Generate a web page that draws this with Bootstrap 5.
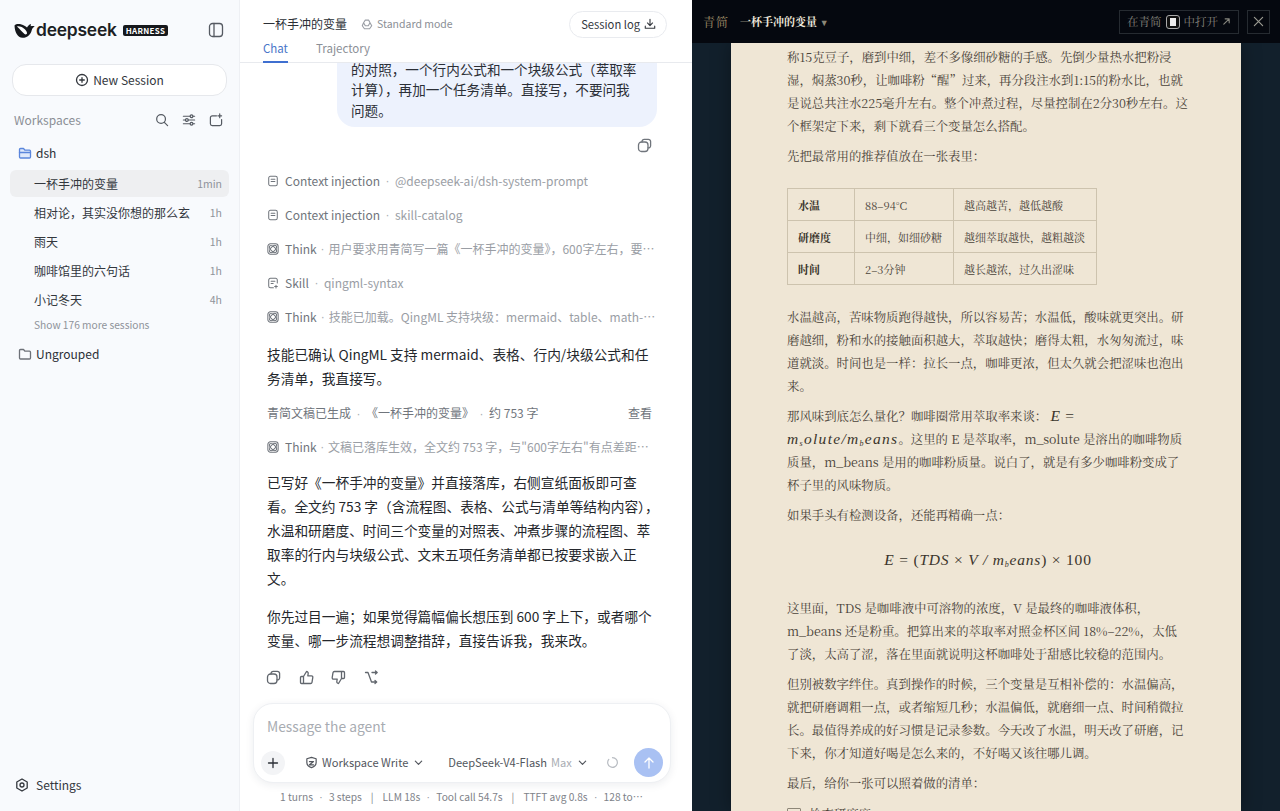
<!DOCTYPE html>
<html lang="zh-CN">
<head>
    <meta charset="UTF-8">
    <meta name="viewport" content="width=device-width, initial-scale=1.0">
    <title>DeepSeek Harness</title>
    <link href="https://cdn.jsdelivr.net/npm/bootstrap@5.3.0/dist/css/bootstrap.min.css" rel="stylesheet">
    <style>
        html, body { height: 811px; overflow: hidden; }
        body { font-family: "Noto Sans CJK SC", "Noto Sans", sans-serif; font-size: 12px; color: #2b2f36; background: #fff; }
        .ic { width: 14px; height: 14px; fill: none; stroke: currentColor; stroke-width: 1.3; stroke-linecap: round; stroke-linejoin: round; flex: none; }

        /* sidebar */
        .side { width: 240px; background: #f8fafd; border-right: 1px solid #eef0f4; padding: 0 10px; }
        .brand { height: 60px; padding: 0 4px; }
        .brand-name { font-family: "Inter", sans-serif; font-weight: 600; font-size: 17.4px; letter-spacing: -.2px; color: #1c1f24; line-height: 1; }
        .badge-h { background: #16181c; color: #fff; font-size: 8px; font-weight: 700; line-height: 11px; padding: 0 3px; border-radius: 2px; letter-spacing: .3px; margin-left: 6px; }
        .btn-new { height: 32px; margin: 4px 2px 0; background: #fff; border: 1px solid #e6e8ec; border-radius: 14px; font-size: 12px; color: #33373d; }
        .ws-head { height: 24px; margin-top: 12px; padding: 0 6px 0 4px; color: #8b8f96; font-size: 12px; }
        .ws-head .ic { color: #555a62; width: 14px; height: 14px; }
        .ws-head .ic + .ic { margin-left: 13px; }
        .folder { height: 24px; padding-left: 8px; font-size: 12px; color: #2b2f36; }
        .sess { height: 29px; padding: 0 7px 0 24px; font-size: 12px; color: #33373d; }
        .sess.active { background: #eeeff1; border-radius: 6px; height: 27px; margin: 1px 0; }
        .sess small { font-size: 10.5px; color: #8f939a; }
        .more { font-size: 10.2px; color: #8f939a; padding-left: 24px; height: 22px; }
        .settings { height: 26px; padding-left: 5px; margin-bottom: 13px; font-size: 12px; color: #33373d; }
        .settings .ic { margin-right: -1px; }

        /* chat */
        .chat { width: 452px; background: #fff; }
        .chat-head { height: 63px; border-bottom: 1px solid #e8eaee; padding: 0 25px 0 23px; }
        .chat-title { font-size: 12px; color: #2b2f36; }
        .mode-ic { color: #9a9ea5; width: 12px; height: 12px; margin-left: 14px; }
        .mode { font-size: 10.5px; color: #8b8f96; }
        .btn-log { height: 27px; padding: 0 10px 0 11px; border: 1px solid #e9ebef; border-radius: 14px; font-size: 11.2px; color: #33373d; background: #fff; }
        .tab { font-size: 11.5px; color: #8b8f96; padding-bottom: 4px; border-bottom: 2px solid transparent; }
        .tab.active { color: #4a76c9; border-bottom-color: #3f6fd0; }
        .chat-scroll { flex: 1 1 0; min-height: 0; overflow: hidden; padding: 0 35px 0 27px; }
        .bubble { align-self: flex-end; width: 320px; background: #edf2fd; border-radius: 0 0 18px 18px; padding: 40px 14px 7px; font-size: 13.6px; line-height: 20.5px; color: #2b2f36; flex: none; }
        .copy-row { height: 37px; flex: none; padding-right: 5px; color: #70757c; }
        .step { height: 34px; flex: none; font-size: 12px; color: #70757c; white-space: nowrap; }
        .step .ic { width: 12px; height: 12px; margin: 0 6px 0 0; color: #70757c; stroke-width: 1.2; }
        .dot { display: inline-block; width: 15px; text-align: center; color: #a9adb3; font-family: "Liberation Sans", sans-serif; }
        .step .det { color: #9a9ea5; overflow: hidden; text-overflow: ellipsis; }
        .md { font-size: 13.7px; line-height: 24px; color: #24272c; margin: 0 -3px 0 0; flex: none; }
        .actions { height: 26px; margin: 0 0 13px -1px; flex: none; color: #62676e; gap: 17.5px; }
        .actions .ic { width: 15px; height: 15px; }

        /* composer */
        .composer { height: 80px; margin: 0 21px 0 13px; border: 1px solid #eef0f3; border-radius: 20px; box-shadow: 0 2px 8px rgba(30,40,60,.08); background: #fff; flex: none; padding: 12px 7px 5px 7px; }
        .ph { color: #a8acb2; font-size: 13.8px; line-height: 20px; padding-left: 6px; }
        .plus { width: 24px; height: 24px; border-radius: 50%; background: #f3f4f6; color: #2b2f36; }
        .pick { font-size: 11.1px; color: #52565d; white-space: nowrap; }
        .pick span { color: #a8acb2; }
        .send { width: 29px; height: 29px; border-radius: 50%; background: #a9c1f3; color: #fff; }
        .stats { height: 28px; flex: none; font-size: 10.2px; color: #7e8289; white-space: nowrap; padding: 0 22px 0 40px; gap: 9px; }
        .stats .dot { width: 16px; color: #8e9298; }

        /* reader */
        .reader { width: 588px; background: #12202c; font-family: "Noto Serif CJK SC", "Liberation Serif", "Noto Sans CJK SC", serif; }
        .reader-bar { height: 43px; background: #05080f; padding: 0 10px 0 11px; flex: none; }
        .reader-bar .brand2 { color: #a3916b; font-size: 12px; letter-spacing: 1px; }
        .reader-bar .doc { color: #efe9dd; font-size: 11px; font-weight: 700; margin-left: 11px; }
        .reader-bar .doc i { color: #8c8778; font-style: normal; font-size: 9px; font-family: "Liberation Serif", serif; }
        .open-btn { height: 24px; padding: 0 7px; border: 1px solid #262b31; color: #85857d; font-size: 11.5px; }
        .open-btn b { display: inline-block; width: 14px; height: 14px; border: 1px solid #aaa; border-radius: 3px; background: #111; position: relative; }
        .open-btn b::after { content: ""; position: absolute; inset: 2px 3px; background: #eee; }
        .close-btn { width: 23px; height: 24px; border: 1px solid #262b31; color: #9b9b93; }
        .paper-wrap { flex: 1 1 0; min-height: 0; overflow: hidden; padding: 0 39px; }
        .paper { background: #efe6d5; height: 100%; overflow: hidden; padding: 3px 52px 0 56px; color: #4a4339; font-size: 12.4px; line-height: 23px; box-shadow: 0 0 18px rgba(0,0,0,.35); }
        .paper p { margin: 0 0 7px; }
        .paper table { border-collapse: collapse; margin: 20px 0 21px; font-size: 11px; line-height: 20px; }
        .paper td { border: 1px solid #cdc3ae; padding: 5px 10px; height: 32px; white-space: nowrap; }
        .paper td:first-child { width: 67px; font-weight: 700; color: #38332a; }
        .paper td:nth-child(2) { width: 99px; }
        .paper td:nth-child(3) { width: 143px; }
        .math { font-family: "Liberation Serif", serif; font-style: italic; font-size: 15.5px; line-height: 0; color: #3b352c; letter-spacing: .8px; }
        .math sub { font-size: 8px; line-height: 0; }
        .math u { font-style: normal; text-decoration: none; }
        .math-wide { letter-spacing: 1.3px; }
        .math-block { text-align: center; font-size: 15.5px; margin: 21px 0 26px; line-height: 23px; }
        .check { width: 14px; height: 14px; border: 1px solid #8e8778; border-radius: 1px; }
    </style>
</head>
<body>
<svg width="0" height="0" class="position-absolute">
    <defs>
        <symbol id="i-doc" viewBox="0 0 14 14"><rect x="2" y="1.5" width="10" height="11" rx="2"/><path d="M4.8 5h4.4M4.8 7.6h4.4"/></symbol>
        <symbol id="i-think" viewBox="0 0 14 14"><rect x="1" y="1" width="12" height="12" rx="3"/><ellipse cx="7" cy="7" rx="5.200" ry="2.600" transform="rotate(45 7 7)"/><ellipse cx="7" cy="7" rx="5.200" ry="2.600" transform="rotate(-45 7 7)"/></symbol>
        <symbol id="i-skill" viewBox="0 0 14 14"><path d="M12 7V3.5a2 2 0 0 0-2-2H4a2 2 0 0 0-2 2v7a2 2 0 0 0 2 2h3.5"/><path d="M4.8 5h4.4M4.8 7.6h2.4M10.5 9.5v3.2M8.9 11.1h3.2"/></symbol>
        <symbol id="i-copy" viewBox="0 0 15 15"><rect x="1.5" y="4" width="9.5" height="9.5" rx="3"/><path d="M5 4V3.6a2.2 2.2 0 0 1 2.2-2.2h4.2a2.2 2.2 0 0 1 2.2 2.2v4.2a2.2 2.2 0 0 1-2.6 2.1"/></symbol>
    </defs>
</svg>
<div class="d-flex" style="height:811px">
    <aside class="side d-flex flex-column flex-shrink-0">
        <div class="brand d-flex align-items-center">
            <svg width="21" height="15" viewBox="0 0 21 15" class="flex-shrink-0" style="margin-right:1px"><path fill="#16181c" d="M.5 2.500C2 .8 5 .8 7.500 1.500 9.500 2 11.500 3.200 13 4.500 13.800 3 15 1.500 17 1c-.3 1-.4 1.600-.2 2.200 1.200-.4 2.700-.4 3.900.2-1.700.8-2.500 2.100-2.900 3.600-.8 4-4.300 7.800-9.300 7.800S.8 9 .5 2.500z"/><path fill="#fff" d="M3 3.500c3 2.500 5 5.500 7.500 7.500 1 .8 2.500.5 2.500-1 0-2-3-5-6-6.200C5.500 3.200 4 3 3 3.500z"/></svg>
            <span class="brand-name">deepseek</span>
            <span class="badge-h">HARNESS</span>
            <svg class="ic ms-auto" style="width:16px;height:16px;color:#555a62;margin-right:1px" viewBox="0 0 16 16"><rect x="1.500" y="1.500" width="13" height="13" rx="3"/><path d="M6 1.500v13"/></svg>
        </div>
        <button class="btn-new d-flex align-items-center justify-content-center gap-1 flex-shrink-0" type="button">
            <svg class="ic" viewBox="0 0 14 14"><circle cx="7" cy="7" r="5.500"/><path d="M7 4.700v4.600M4.700 7h4.600"/></svg>
            New Session
        </button>
        <div class="ws-head d-flex align-items-center flex-shrink-0">
            <span class="me-auto">Workspaces</span>
            <svg class="ic" viewBox="0 0 15 15"><circle cx="6.500" cy="6.500" r="4.700"/><path d="M10 10l3.500 3.500"/></svg>
            <svg class="ic" viewBox="0 0 15 15"><path d="M1.500 3.500h7M12 3.500h1.500M1.500 7.500h2M7 7.500h6.500M1.500 11.500h7M12 11.500h1.500"/><circle cx="10.200" cy="3.500" r="1.500"/><circle cx="5.200" cy="7.500" r="1.500"/><circle cx="10.200" cy="11.500" r="1.500"/></svg>
            <svg class="ic" viewBox="0 0 15 15"><path d="M8 3H3.500a2 2 0 0 0-2 2v6.500a2 2 0 0 0 2 2h8a2 2 0 0 0 2-2V7M11.500 1v4M9.500 3h4"/></svg>
        </div>
        <div class="folder d-flex align-items-center gap-1 flex-shrink-0" style="margin-top:9px">
            <svg class="ic" style="color:#5a86dc" viewBox="0 0 14 14"><path fill="#dfe9fb" d="M1.500 11V3.500a1 1 0 0 1 1-1h3l1.500 1.700h4.500a1 1 0 0 1 1 1V11a1 1 0 0 1-1 1h-9a1 1 0 0 1-1-1z"/><path d="M1.500 6.500h11"/></svg>
            dsh
        </div>
        <div class="sess active d-flex align-items-center justify-content-between flex-shrink-0" style="margin-top:5px"><span>一杯手冲的变量</span><small>1min</small></div>
        <div class="sess d-flex align-items-center justify-content-between flex-shrink-0"><span>相对论，其实没你想的那么玄</span><small>1h</small></div>
        <div class="sess d-flex align-items-center justify-content-between flex-shrink-0"><span>雨天</span><small>1h</small></div>
        <div class="sess d-flex align-items-center justify-content-between flex-shrink-0"><span>咖啡馆里的六句话</span><small>1h</small></div>
        <div class="sess d-flex align-items-center justify-content-between flex-shrink-0"><span>小记冬天</span><small>4h</small></div>
        <div class="more d-flex align-items-center flex-shrink-0">Show 176 more sessions</div>
        <div class="folder d-flex align-items-center gap-1 flex-shrink-0" style="margin-top:6px">
            <svg class="ic" style="color:#6d7178" viewBox="0 0 14 14"><path d="M1.500 11V3.500a1 1 0 0 1 1-1h3l1.500 1.700h4.500a1 1 0 0 1 1 1V11a1 1 0 0 1-1 1h-9a1 1 0 0 1-1-1z"/></svg>
            Ungrouped
        </div>
        <div class="settings d-flex align-items-center gap-2 mt-auto flex-shrink-0">
            <svg class="ic" viewBox="0 0 14 14"><path d="M7 1l5.200 3v6L7 13l-5.200-3V4z"/><circle cx="7" cy="7" r="2"/></svg>
            Settings
        </div>
    </aside>

    <main class="chat d-flex flex-column flex-shrink-0">
        <header class="chat-head d-flex flex-column flex-shrink-0">
            <div class="d-flex align-items-center" style="height:38px;padding-top:10px">
                <span class="chat-title">一杯手冲的变量</span>
                <svg class="ic mode-ic" viewBox="0 0 14 14"><path d="M5 2.500h4l1.500 3-2 3.500H5L3 5.500zM3 5.500L1.500 9 4 12.500h6L12.500 9 10.500 5.500"/></svg>
                <span class="mode ms-1">Standard mode</span>
                <button class="btn-log d-flex align-items-center gap-1 ms-auto" type="button">Session log
                    <svg class="ic" style="width:12px;height:12px" viewBox="0 0 14 14"><path d="M7 1.500v7M4 5.800L7 8.800l3-3M1.500 9.500v2.500h11V9.500"/></svg>
                </button>
            </div>
            <div class="d-flex gap-4 mt-auto" style="margin-bottom:-1px">
                <span class="tab active">Chat</span>
                <span class="tab ms-1">Trajectory</span>
            </div>
        </header>

        <div class="chat-scroll d-flex flex-column justify-content-end">
            <div class="bubble">的对照，一个行内公式和一个块级公式（萃取率计算），再加一个任务清单。直接写，不要问我问题。</div>
            <div class="copy-row d-flex align-items-center justify-content-end">
                <svg class="ic" style="width:15px;height:15px"><use href="#i-copy"/></svg>
            </div>
            <div class="step d-flex align-items-center"><svg class="ic"><use href="#i-doc"/></svg>Context injection<span class="dot">·</span><span class="det">@deepseek-ai/dsh-system-prompt</span></div>
            <div class="step d-flex align-items-center"><svg class="ic"><use href="#i-doc"/></svg>Context injection<span class="dot">·</span><span class="det">skill-catalog</span></div>
            <div class="step d-flex align-items-center"><svg class="ic"><use href="#i-think"/></svg>Think<span class="dot">·</span><span class="det">用户要求用青简写一篇《一杯手冲的变量》，600字左右，要求包含流程图和表格</span></div>
            <div class="step d-flex align-items-center"><svg class="ic"><use href="#i-skill"/></svg>Skill<span class="dot">·</span><span class="det">qingml-syntax</span></div>
            <div class="step d-flex align-items-center"><svg class="ic"><use href="#i-think"/></svg>Think<span class="dot">·</span><span class="det">技能已加载。QingML 支持块级：mermaid、table、math-block、任务清单</span></div>
            <p class="md" style="margin-top:8px;margin-bottom:6px">技能已确认 QingML 支持 mermaid、表格、行内/块级公式和任务清单，我直接写。</p>
            <div class="step d-flex align-items-center justify-content-between" style="padding-right:5px">
                <span>青简文稿已生成<span class="dot">·</span>《一杯手冲的变量》<span class="dot">·</span>约 753 字</span><span>查看</span>
            </div>
            <div class="step d-flex align-items-center"><svg class="ic"><use href="#i-think"/></svg>Think<span class="dot">·</span><span class="det">文稿已落库生效，全文约 753 字，与"600字左右"有点差距但可以接受，可告知用户</span></div>
            <p class="md" style="margin-top:6px">已写好《一杯手冲的变量》并直接落库，右侧宣纸面板即可查看。全文约 753 字（含流程图、表格、公式与清单等结构内容），水温和研磨度、时间三个变量的对照表、冲煮步骤的流程图、萃取率的行内与块级公式、文末五项任务清单都已按要求嵌入正文。</p>
            <p class="md" style="margin-top:14px;margin-bottom:12px">你先过目一遍；如果觉得篇幅偏长想压到 600 字上下，或者哪个变量、哪一步流程想调整措辞，直接告诉我，我来改。</p>
            <div class="actions d-flex align-items-center">
                <svg class="ic"><use href="#i-copy"/></svg>
                <svg class="ic" viewBox="0 0 15 15"><path d="M4.500 6.500v7H2.500a1 1 0 0 1-1-1v-5a1 1 0 0 1 1-1zM4.500 6.500L7.500 1.500a1.800 1.800 0 0 1 1.700 2L8.800 5.800h3.700a1.300 1.300 0 0 1 1.300 1.500l-.8 5a1.500 1.500 0 0 1-1.500 1.200H4.500"/></svg>
                <svg class="ic" viewBox="0 0 15 15"><path d="M10.500 8.500v-7h2a1 1 0 0 1 1 1v5a1 1 0 0 1-1 1zM10.500 8.500L7.500 13.500a1.800 1.800 0 0 1-1.700-2l.4-2.300H2.500a1.300 1.300 0 0 1-1.300-1.500l.8-5a1.500 1.500 0 0 1 1.500-1.200h7"/></svg>
                <svg class="ic" viewBox="0 0 15 15"><path d="M1.500 2.500h2.500l3.500 9.500h5M8 2.500h5M11.500 1l1.700 1.500-1.700 1.500M11 10.500l1.700 1.500-1.700 1.500"/></svg>
            </div>
        </div>

        <div class="composer d-flex flex-column justify-content-between">
            <div class="ph">Message the agent</div>
            <div class="d-flex align-items-center">
                <div class="plus d-flex align-items-center justify-content-center"><svg class="ic" style="width:12px;height:12px" viewBox="0 0 12 12"><path d="M6 1.500v9M1.500 6h9"/></svg></div>
                <div class="pick d-flex align-items-center gap-1" style="margin-left:20px">
                    <svg class="ic" style="width:13px;height:13px" viewBox="0 0 14 14"><path d="M7 1.500l5 1.500v4c0 3-2.200 4.700-5 5.500-2.800-.8-5-2.500-5-5.500V3zM4.800 6h4.400L4.800 9.500h4.400"/></svg>
                    Workspace Write
                    <svg class="ic" style="width:9px;height:9px;margin-left:2px" viewBox="0 0 10 10"><path d="M1.500 3.500L5 7l3.500-3.500"/></svg>
                </div>
                <div class="pick d-flex align-items-center gap-1" style="margin-left:25px">
                    DeepSeek-V4-Flash <span>Max</span>
                    <svg class="ic" style="width:9px;height:9px;margin-left:2px" viewBox="0 0 10 10"><path d="M1.500 3.500L5 7l3.500-3.500"/></svg>
                </div>
                <svg class="ic ms-auto" style="width:13px;height:13px;color:#b8bcc2;margin-right:15px" viewBox="0 0 14 14"><path d="M7 1.800a5.200 5.200 0 1 1-4 1.900"/></svg>
                <div class="send d-flex align-items-center justify-content-center"><svg class="ic" viewBox="0 0 14 14"><path d="M7 12V2M3 6l4-4 4 4"/></svg></div>
            </div>
        </div>
        <div class="stats d-flex align-items-center">
            <span>1 turns<span class="dot">·</span>3 steps</span><span>|</span><span>LLM 18s<span class="dot">·</span>Tool call 54.7s</span><span>|</span><span>TTFT avg 0.8s<span class="dot">·</span>128 to⋯</span>
        </div>
    </main>

    <section class="reader d-flex flex-column flex-shrink-0">
        <div class="reader-bar d-flex align-items-center">
            <span class="brand2">青简</span>
            <span class="doc">一杯手冲的变量 <i>▼</i></span>
            <div class="open-btn d-flex align-items-center gap-1 ms-auto">在青简 <b></b> 中打开
                <svg class="ic" style="width:9px;height:9px" viewBox="0 0 10 10"><path d="M2 8l6-6M3.500 2H8v4.500"/></svg>
            </div>
            <div class="close-btn d-flex align-items-center justify-content-center ms-2">
                <svg class="ic" style="width:11px;height:11px" viewBox="0 0 12 12"><path d="M1.500 1.500l9 9M10.500 1.500l-9 9"/></svg>
            </div>
        </div>
        <div class="paper-wrap">
            <article class="paper">
                <p>称15克豆子，磨到中细，差不多像细砂糖的手感。先倒少量热水把粉浸湿，焖蒸30秒，让咖啡粉“醒”过来，再分段注水到1:15的粉水比，也就是说总共注水225毫升左右。整个冲煮过程，尽量控制在2分30秒左右。这个框架定下来，剩下就看三个变量怎么搭配。</p>
                <p>先把最常用的推荐值放在一张表里：</p>
                <table>
                    <tr><td>水温</td><td>88–94°C</td><td>越高越苦，越低越酸</td></tr>
                    <tr><td>研磨度</td><td>中细，如细砂糖</td><td>越细萃取越快，越粗越淡</td></tr>
                    <tr><td>时间</td><td>2–3分钟</td><td>越长越浓，过久出涩味</td></tr>
                </table>
                <p>水温越高，苦味物质跑得越快，所以容易苦；水温低，酸味就更突出。研磨越细，粉和水的接触面积越大，萃取越快；磨得太粗，水匆匆流过，味道就淡。时间也是一样：拉长一点，咖啡更浓，但太久就会把涩味也泡出来。</p>
                <p>那风味到底怎么量化？咖啡圈常用萃取率来谈： <span class="math">E <u>=</u></span><br><span class="math math-wide">m<sub>s</sub>olute/m<sub>b</sub>eans</span>。这里的 E 是萃取率，m_solute 是溶出的咖啡物质质量，m_beans 是用的咖啡粉质量。说白了，就是有多少咖啡粉变成了杯子里的风味物质。</p>
                <p>如果手头有检测设备，还能再精确一点：</p>
                <div class="math math-block">E <u>=</u> <u>(</u>TDS <u>×</u> V / m<sub>b</sub>eans<u>) × 100</u></div>
                <p>这里面，TDS 是咖啡液中可溶物的浓度，V 是最终的咖啡液体积，m_beans 还是粉重。把算出来的萃取率对照金杯区间 18%–22%，太低了淡，太高了涩，落在里面就说明这杯咖啡处于甜感比较稳的范围内。</p>
                <p>但别被数字绊住。真到操作的时候，三个变量是互相补偿的：水温偏高，就把研磨调粗一点，或者缩短几秒；水温偏低，就磨细一点、时间稍微拉长。最值得养成的好习惯是记录参数。今天改了水温，明天改了研磨，记下来，你才知道好喝是怎么来的，不好喝又该往哪儿调。</p>
                <p>最后，给你一张可以照着做的清单：</p>
                <div class="d-flex align-items-center gap-2 mt-2"><span class="check flex-shrink-0"></span>检查研磨度</div>
            </article>
        </div>
    </section>
</div>
<script src="https://cdn.jsdelivr.net/npm/bootstrap@5.3.0/dist/js/bootstrap.bundle.min.js"></script>
</body>
</html>
